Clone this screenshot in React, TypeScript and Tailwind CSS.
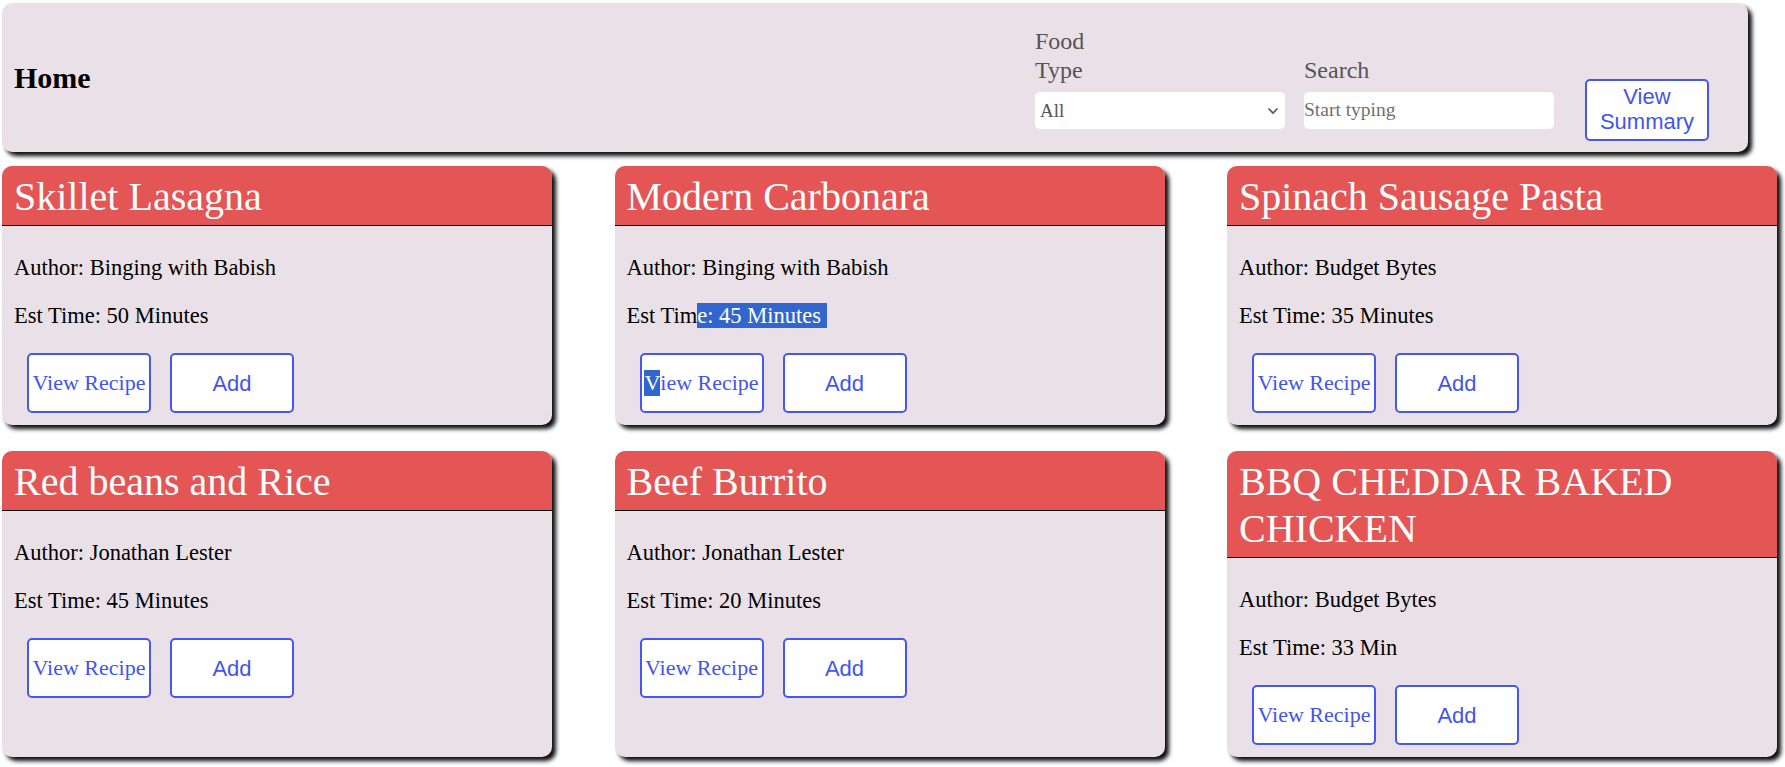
import React from 'react';

type Recipe = {
  title: string;
  author: string;
  time: string;
};

const recipes: Recipe[] = [
  { title: 'Skillet Lasagna', author: 'Binging with Babish', time: '50 Minutes' },
  { title: 'Modern Carbonara', author: 'Binging with Babish', time: '45 Minutes' },
  { title: 'Spinach Sausage Pasta', author: 'Budget Bytes', time: '35 Minutes' },
  { title: 'Red beans and Rice', author: 'Jonathan Lester', time: '45 Minutes' },
  { title: 'Beef Burrito', author: 'Jonathan Lester', time: '20 Minutes' },
  { title: 'BBQ CHEDDAR BAKED CHICKEN', author: 'Budget Bytes', time: '33 Min' },
];

const serif = "font-['Liberation_Serif','Times_New_Roman',serif]";
const sans = "font-['Liberation_Sans',Arial,sans-serif]";

const RecipeCard: React.FC<{ recipe: Recipe; selected?: boolean }> = ({ recipe, selected }) => {
  return (
    <div className="flex flex-col rounded-[10px] overflow-hidden bg-[#eae1e8] shadow-[4px_4px_4px_rgba(0,0,0,0.95)]">
      {/* title bar */}
      <div className="bg-[#e45555] border-b border-black pl-[12px] pr-[12px] pt-[7px] pb-[5px]">
        <h2 className="text-[40px] leading-[47px] text-white font-normal">{recipe.title}</h2>
      </div>
      <div className="pl-[12px] pt-[29px] pb-[12px]">
        <p className="text-[22.5px] leading-[26px] text-black">Author: {recipe.author}</p>
        <p className="mt-[22px] text-[22.5px] leading-[26px] text-black">
          {selected ? (
            <>
              Est Tim<span className="bg-[#3166cf] text-white pr-[6px]">e: {recipe.time}</span>
            </>
          ) : (
            <>Est Time: {recipe.time}</>
          )}
        </p>
        <div className="mt-[24px] ml-[13px] flex gap-[19px]">
          <button className={`w-[124px] h-[60px] rounded-[5px] border-2 border-[#4656f2] bg-white text-[#4254ef] text-[22px] leading-[26px] whitespace-nowrap flex items-center justify-center ${serif}`}>
            {selected ? (
              <>
                <span className="bg-[#3166cf] text-white">V</span>iew Recipe
              </>
            ) : (
              'View Recipe'
            )}
          </button>
          <button className={`w-[124px] h-[60px] rounded-[5px] border-2 border-[#4656f2] bg-white text-[#4254ef] text-[22px] ${sans}`}>
            Add
          </button>
        </div>
      </div>
    </div>
  );
};

export default function App() {
  return (
    <div className={`min-h-screen bg-white pb-[10px] ${serif}`}>
      <header className="ml-[2px] mt-[3px] w-[1746px] h-[149px] rounded-[10px] bg-[#eae1e8] shadow-[4px_4px_4px_rgba(0,0,0,0.95)] flex items-center justify-between pl-[12px] pr-[39px]">
        <h1 className="text-[30px] font-bold text-black leading-[34px]">Home</h1>

        <div className="flex items-end">
          <div className="w-[250px] flex flex-col">
            <label className="w-min text-[24px] leading-[29px] text-[#555]">Food Type</label>
            <div className="relative mt-[7px]">
              <select className={`appearance-none w-[250px] h-[37px] rounded-[5px] bg-white pl-[5px] pt-[2px] text-[19px] text-[#555] outline-none ${serif}`}>
                <option>All</option>
              </select>
              <svg className="absolute right-[6px] top-[15px] pointer-events-none" width="12" height="8" viewBox="0 0 12 8" fill="none">
                <path d="M1.5 1.5 L6 6 L10.5 1.5" stroke="#555" strokeWidth="1.6" />
              </svg>
            </div>
          </div>

          <div className="ml-[19px] w-[250px] flex flex-col">
            <label className="text-[24px] leading-[29px] text-[#555]">Search</label>
            <input
              placeholder="Start typing"
              className={`mt-[7px] w-[250px] h-[37px] rounded-[5px] bg-white px-0 text-[19.5px] text-[#555] placeholder:text-[#6f6f6f] outline-none ${serif}`}
            />
          </div>

          <button className={`ml-[31px] mb-[-12px] w-[124px] h-[62px] rounded-[5px] border-2 border-[#4656f2] bg-white text-[#4254ef] text-[22px] leading-[24.5px] ${sans}`}>
            View
            <br />
            Summary
          </button>
        </div>
      </header>

      <main className="ml-[2px] mt-[14px] w-[1775px] grid grid-cols-[550px_550px_550px] justify-between gap-y-[26px]">
        {recipes.map((r, i) => (
          <RecipeCard key={r.title} recipe={r} selected={i === 1} />
        ))}
      </main>
    </div>
  );
}
